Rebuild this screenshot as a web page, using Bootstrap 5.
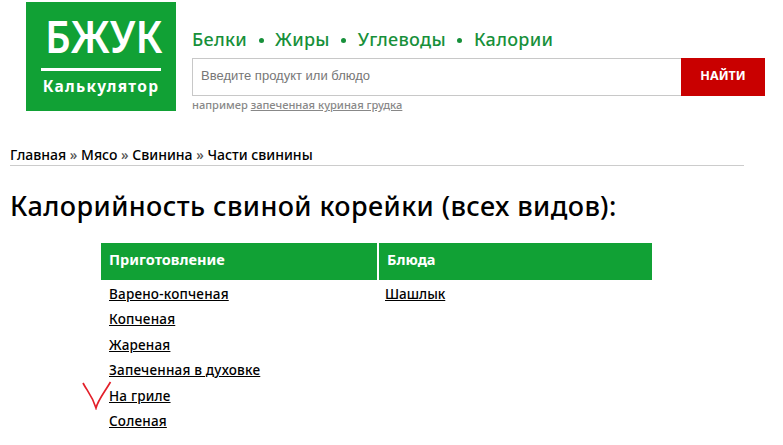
<!DOCTYPE html>
<html lang="ru"><head><meta charset="utf-8"><title>БЖУК</title>
<link href="https://cdn.jsdelivr.net/npm/bootstrap@5.3.0/dist/css/bootstrap.min.css" rel="stylesheet">
<style>
html,body{overflow:hidden}
body{font-family:"Noto Sans",sans-serif;color:#000;background:#fff;height:445px;padding:2px 0 0 10px;position:relative}
.hdr{padding-left:16px;width:755px;gap:16px}
.logo{width:150px;height:109px;background:#11a135;color:#fff;padding:0 15px}
.logo-big{font-size:45px;line-height:1;font-weight:600;padding-top:11px;height:66px;text-align:center;white-space:nowrap;transform:translateX(-2px) scaleX(.9)}
.logo-sub{border-top:3px solid #fff;font-size:15.5px;font-weight:700;letter-spacing:1.3px;text-align:center;padding-top:4px;line-height:22px;white-space:nowrap}
.side{flex:1;padding-top:18px}
.topnav{font-size:18px;line-height:24px;color:#17903a;letter-spacing:.3px;font-weight:500;gap:11.5px;height:38px;white-space:nowrap}
.dot{width:5px;height:5px;border-radius:50%;background:#17903a;margin-top:3px}
.srch{height:38px}
.srch-in{flex:1;border:1px solid #c8c8c8;border-right:0;border-radius:0;font-family:"Liberation Sans",sans-serif;font-size:13px;padding:0 8px 3px;height:38px}
.srch-in::placeholder{color:#777;opacity:1}
.srch-btn{width:84px;background:#c90000;color:#fff;border:0;border-radius:0;font-size:12.5px;font-weight:700;padding:0 0 1px;letter-spacing:0}
.hint{font-size:11.1px;font-weight:500;color:#888;line-height:14px;margin-top:2px;white-space:nowrap}
.hint a{color:#888}
.crumbs{width:734px;margin-top:33px;border-bottom:1px solid #ccc;font-size:14px;font-weight:500;line-height:20px;white-space:nowrap}
.crumbs i{font-style:normal;color:#555}
.ttl{font-size:27px;font-weight:500;line-height:36px;margin:22px 0 0;letter-spacing:.41px;white-space:nowrap}
.cols{margin:19px 0 0 91px;width:551px;gap:2px}
.colh{background:#11a135;color:#fff;font-size:14.5px;font-weight:700;height:37px;line-height:32px;padding-left:8px}
.c1{width:276px}.c2{width:273px}
.linkrow{font-size:13.5px;font-weight:500;line-height:25.4px;letter-spacing:.2px;padding-left:8px;white-space:nowrap}
.c2 .linkrow{padding-left:6px;letter-spacing:0}
.linkrow a{color:#000}
.colbody{padding-top:2px}
.tick{position:absolute;left:81px;top:380px}
</style></head><body>
<div class="hdr d-flex">
 <div class="logo"><div class="logo-big">БЖУК</div><div class="logo-sub">Калькулятор</div></div>
 <div class="side">
  <div class="topnav d-flex align-items-center"><span>Белки</span><span class="dot"></span><span>Жиры</span><span class="dot"></span><span>Углеводы</span><span class="dot"></span><span>Калории</span></div>
  <form class="srch d-flex"><input class="srch-in" type="text" placeholder="Введите продукт или блюдо"><button class="srch-btn btn" type="button">НАЙТИ</button></form>
  <div class="hint">например <a href="#">запеченная куриная грудка</a></div>
 </div>
</div>
<div class="crumbs">Главная <i>»</i> Мясо <i>»</i> Свинина <i>»</i> Части свинины</div>
<h1 class="ttl">Калорийность свиной корейки (всех видов):</h1>
<div class="cols d-flex">
 <div class="c1"><div class="colh">Приготовление</div><div class="colbody">
  <div class="linkrow"><a href="#">Варено-копченая</a></div>
  <div class="linkrow"><a href="#">Копченая</a></div>
  <div class="linkrow"><a href="#">Жареная</a></div>
  <div class="linkrow"><a href="#">Запеченная в духовке</a></div>
  <div class="linkrow"><a href="#">На гриле</a></div>
  <div class="linkrow"><a href="#">Соленая</a></div>
 </div></div>
 <div class="c2"><div class="colh">Блюда</div><div class="colbody">
  <div class="linkrow"><a href="#">Шашлык</a></div>
 </div></div>
</div>
<svg class="tick" width="32" height="30" viewBox="0 0 32 30" fill="none"><path d="M2 3 C6 11 11 15 15 28 C17 20 23 13 29.500 2" stroke="#e3202a" stroke-width="1.700"/></svg>
</body></html>
